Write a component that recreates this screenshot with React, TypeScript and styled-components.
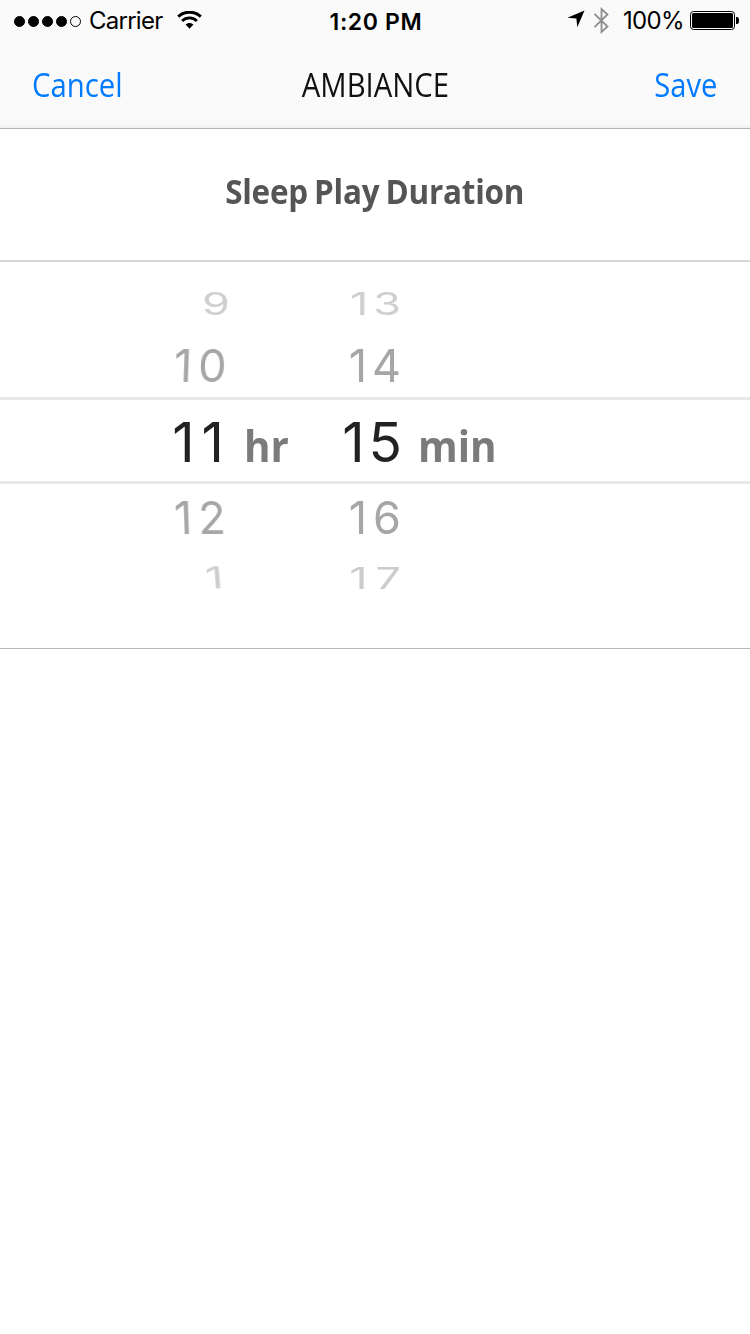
import React from "react";
import styled, { createGlobalStyle } from "styled-components";

const GlobalStyle = createGlobalStyle`
  * { box-sizing: border-box; }
  html, body { margin: 0; padding: 0; background: #fff; }
`;

const Screen = styled.main`
  width: 750px;
  height: 1334px;
  overflow: hidden;
  background: #fff;
  font-family: "Open Sans", sans-serif;
`;

const Header = styled.header`
  height: 129px;
  background: #fafafa;
  border-bottom: 1px solid #b4b4b4;
  box-shadow: inset 0 -3px 0 #f3f3f3;
`;

const StatusBar = styled.div`
  display: grid;
  grid-template-columns: 1fr auto 1fr;
  align-items: center;
  height: 40px;
  padding: 0 11px 0 14px;
  font-family: Inter, sans-serif;
  font-size: 24px;
  line-height: 40px;
  color: #000;
`;

const StatusGroup = styled.div<{ $end?: boolean }>`
  display: flex;
  align-items: center;
  justify-content: ${(p) => (p.$end ? "flex-end" : "flex-start")};
  height: 40px;
`;

const Dots = styled.div`
  display: flex;
  gap: 3px;
  margin-right: 8px;
`;

const Dot = styled.i<{ $empty?: boolean }>`
  width: 11px;
  height: 11px;
  border-radius: 50%;
  border: 1px solid #000;
  background: ${(p) => (p.$empty ? "transparent" : "#000")};
`;

const Carrier = styled.span`
  width: 73px;
  margin-right: 15px;
  letter-spacing: -0.75px;
  white-space: nowrap;
`;

const Clock = styled.span`
  font-weight: 600;
  font-size: 23px;
  letter-spacing: 0.65px;
  padding-top: 2px;
  margin-right: 1px;
`;

const Percent = styled.span`
  width: 60px;
  margin: 0 7px 0 14px;
  white-space: nowrap;
  letter-spacing: -0.7px;
`;

const NavBar = styled.nav`
  display: grid;
  grid-template-columns: 1fr auto 1fr;
  align-items: center;
  height: 88px;
  padding: 2px 33px 0 32px;
`;

const NavText = styled.span<{ $scale: number; $origin: string }>`
  font-size: 32px;
  line-height: 44px;
  white-space: nowrap;
  transform: scaleX(${(p) => p.$scale});
  transform-origin: ${(p) => p.$origin} center;
`;

const NavButton = styled(NavText).attrs({ as: "button" })`
  padding: 0;
  border: 0;
  background: none;
  font-family: inherit;
  color: #007aff;
  justify-self: ${(p) => (p.$origin === "left" ? "start" : "end")};
`;

const NavTitle = styled(NavText)`
  margin-left: 2px;
  color: #111;
`;

const TitleRow = styled.section`
  display: flex;
  align-items: center;
  justify-content: center;
  height: 133px;
  padding-bottom: 7px;
  border-bottom: 2px solid #d7d7d7;
`;

const Title = styled.h1`
  margin: 0;
  font-size: 34px;
  line-height: 48px;
  font-weight: 700;
  letter-spacing: -0.25px;
  word-spacing: -2px;
  color: #555;
  white-space: nowrap;
  transform: scaleX(0.925);
`;

const Picker = styled.section`
  height: 387px;
  padding-top: 12px;
  border-bottom: 1px solid #b8b8b8;
`;

const Row = styled.div<{ $height: number; $selected?: boolean }>`
  display: grid;
  grid-template-columns: 232px 104px 70px 1fr;
  align-items: center;
  height: ${(p) => p.$height}px;
  border: solid #e8e8e8;
  border-width: ${(p) => (p.$selected ? "3px 0" : "0")};
`;

const Digits = styled.span<{
  $size: number;
  $squash: number;
  $color: string;
  $inset: number;
  $spacing: number;
  $drop?: number;
  $tilt?: number;
}>`
  justify-self: end;
  margin-top: ${(p) => p.$drop ?? 0}px;
  margin-right: ${(p) => p.$inset - p.$spacing}px;
  font-family: Inter, sans-serif;
  font-size: ${(p) => p.$size}px;
  letter-spacing: ${(p) => p.$spacing}px;
  line-height: 1;
  color: ${(p) => p.$color};
  transform: scaleY(${(p) => p.$squash}) skewX(${(p) => p.$tilt ?? 0}deg);
  filter: blur(0.6px);
`;

const Unit = styled.span`
  margin: 10px 0 0 12px;
  justify-self: start;
  font-size: 43px;
  line-height: 60px;
  font-weight: 700;
  color: #7b7b7b;
  transform: scaleX(0.94);
  transform-origin: left center;
`;

const Wifi = () => (
  <svg width="25" height="19" viewBox="0 0 25 19" fill="none" stroke="#000">
    <path d="M1.2 5.6C7.5 -.3 17.5 -.3 23.8 5.6" strokeWidth="3" />
    <path d="M5.1 9.9C9.2 5.9 15.8 5.9 19.9 9.9" strokeWidth="2.8" />
    <path d="M8.5 13.6C10.8 11.5 14.2 11.5 16.5 13.6L12.5 17.8Z" fill="#000" stroke="none" />
  </svg>
);

const Location = () => (
  <svg width="18" height="18" viewBox="0 0 18 18">
    <path d="M17.5.5L10.3 17.2L9.4 8.5L.4 7.7Z" fill="#000" />
  </svg>
);

const Bluetooth = () => (
  <svg width="16" height="27" viewBox="0 0 16 27" fill="none" stroke="#8e8e8e" strokeWidth="1.8">
    <path d="M1.5 6.8L14.5 19.5L8.5 25V2L14.5 7.5L1.5 20.2" />
  </svg>
);

const Battery = () => (
  <svg width="49" height="20" viewBox="0 0 49 20">
    <rect x=".5" y=".5" width="44" height="18" rx="3" fill="none" stroke="#000" />
    <rect x="2" y="2" width="41" height="15" rx="1.5" />
    <path d="M46 6h1q2 0 2 3.5t-2 3.5h-1z" />
  </svg>
);

const IconSlot = styled.span<{ $right?: number; $bottom?: number }>`
  display: flex;
  margin-right: ${(p) => p.$right ?? 0}px;
  margin-bottom: ${(p) => p.$bottom ?? 0}px;
`;

const rows = [
  { hour: "9", minute: "13", height: 60, size: 45, squash: 0.69, color: "#cfcfcf", tilt: 0, hourInset: 2, hourSpacing: 0, spacing: 5 },
  { hour: "10", minute: "14", height: 63, size: 45, squash: 1, color: "#a6a6a6", tilt: -2, hourInset: 5, hourSpacing: 6, spacing: 5 },
  { hour: "11", minute: "15", height: 87, size: 55, squash: 1, color: "#222222", tilt: 0, hourInset: 8, hourSpacing: 7, spacing: 4 },
  { hour: "12", minute: "16", height: 68, size: 45, squash: 1, color: "#a6a6a6", tilt: 2, hourInset: 6, hourSpacing: 6, spacing: 6 },
  { hour: "1", minute: "17", height: 52, size: 45, squash: 0.67, color: "#cccccc", tilt: 3, hourInset: 9, hourSpacing: 0, spacing: 8 },
];

export default function App() {
  return (
    <Screen>
      <GlobalStyle />
      <Header>
        <StatusBar>
          <StatusGroup>
            <Dots>
              <Dot /><Dot /><Dot /><Dot /><Dot $empty />
            </Dots>
            <Carrier>Carrier</Carrier>
            <IconSlot $bottom={1}><Wifi /></IconSlot>
          </StatusGroup>
          <Clock>1:20 PM</Clock>
          <StatusGroup $end>
            <IconSlot $right={8} $bottom={4}><Location /></IconSlot>
            <IconSlot $bottom={2}><Bluetooth /></IconSlot>
            <Percent>100%</Percent>
            <Battery />
          </StatusGroup>
        </StatusBar>
        <NavBar>
          <NavButton $scale={0.915} $origin="left">Cancel</NavButton>
          <NavTitle $scale={0.915} $origin="center">AMBIANCE</NavTitle>
          <NavButton $scale={0.91} $origin="right">Save</NavButton>
        </NavBar>
      </Header>
      <TitleRow>
        <Title>Sleep Play Duration</Title>
      </TitleRow>
      <Picker>
        {rows.map((row) => {
          const selected = row.hour === "11";
          const style = {
            $size: row.size,
            $squash: row.squash,
            $color: row.color,
            $drop: selected ? 3 : -1,
          };
          return (
            <Row key={row.minute} $height={row.height} $selected={selected}>
              <Digits {...style} $inset={row.hourInset} $spacing={row.hourSpacing} $tilt={row.tilt}>
                {row.hour}
              </Digits>
              {selected ? <Unit>hr</Unit> : <span />}
              <Digits {...style} $inset={selected ? 4 : 5} $spacing={row.spacing}>
                {row.minute}
              </Digits>
              {selected ? <Unit>min</Unit> : <span />}
            </Row>
          );
        })}
      </Picker>
    </Screen>
  );
}
